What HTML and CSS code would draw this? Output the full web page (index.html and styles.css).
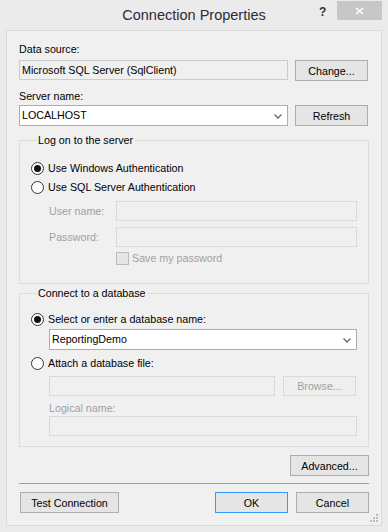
FILE: index.html
```html
<!DOCTYPE html>
<html>
<head>
	<meta charset="utf-8">
	<title>Connection Properties</title>
	<link rel="stylesheet" href="styles.css">
</head>
<body>
	<div class="window">
		<div class="titlebar">
			<span class="caption">Connection Properties</span>
			<span class="help">?</span>
			<span class="close">
				<svg width="9" height="8" viewBox="0 0 9 8"><path d="M1 1 L8 7 M8 1 L1 7" stroke="#fff" stroke-width="1.6"/></svg>
			</span>
		</div>
		<div class="client">
			<div class="label first">Data source:</div>
			<div class="row">
				<div class="textbox readonly wide">Microsoft SQL Server (SqlClient)</div>
				<button class="btn">Change...</button>
			</div>
			<div class="label server">Server name:</div>
			<div class="row server-row">
				<div class="textbox combo wide">LOCALHOST
					<svg class="arrow" width="8" height="5" viewBox="0 0 8 5"><path d="M0.5 0.5 L4 4 L7.5 0.5" stroke="#666" stroke-width="1.3" fill="none"/></svg>
				</div>
				<button class="btn">Refresh</button>
			</div>

			<fieldset class="group logon">
				<legend>Log on to the server</legend>
				<label class="opt"><input type="radio" name="auth" checked><span>Use Windows Authentication</span></label>
				<label class="opt"><input type="radio" name="auth"><span>Use SQL Server Authentication</span></label>
				<div class="field user">
					<span class="dim">User name:</span>
					<div class="textbox disabled"></div>
				</div>
				<div class="field pass">
					<span class="dim">Password:</span>
					<div class="textbox disabled"></div>
				</div>
				<div class="save">
					<span class="check"></span>
					<span class="dim">Save my password</span>
				</div>
			</fieldset>

			<fieldset class="group database">
				<legend>Connect to a database</legend>
				<label class="opt"><input type="radio" name="db" checked><span>Select or enter a database name:</span></label>
				<div class="textbox combo indent">ReportingDemo
					<svg class="arrow" width="8" height="5" viewBox="0 0 8 5"><path d="M0.5 0.5 L4 4 L7.5 0.5" stroke="#666" stroke-width="1.3" fill="none"/></svg>
				</div>
				<label class="opt attach"><input type="radio" name="db"><span>Attach a database file:</span></label>
				<div class="row file-row">
					<div class="textbox disabled file"></div>
					<button class="btn disabled-btn">Browse...</button>
				</div>
				<div class="label dim logical">Logical name:</div>
				<div class="textbox disabled indent logical-box"></div>
			</fieldset>

			<div class="advanced-row">
				<button class="btn advanced">Advanced...</button>
			</div>
			<div class="separator"></div>
			<div class="footer">
				<button class="btn test">Test Connection</button>
				<div class="spacer"></div>
				<button class="btn ok">OK</button>
				<button class="btn">Cancel</button>
			</div>
			<svg class="grip" width="9" height="9" viewBox="0 0 9 9">
				<rect x="6" y="0" width="2" height="2" fill="#bcbcbc"/>
				<rect x="3" y="3" width="2" height="2" fill="#bcbcbc"/>
				<rect x="6" y="3" width="2" height="2" fill="#bcbcbc"/>
				<rect x="0" y="6" width="2" height="2" fill="#bcbcbc"/>
				<rect x="3" y="6" width="2" height="2" fill="#bcbcbc"/>
				<rect x="6" y="6" width="2" height="2" fill="#bcbcbc"/>
			</svg>
		</div>
	</div>
</body>
</html>
```

FILE: styles.css
```css
body {
	margin: 0;
	padding: 0;
	background-color: #ebebeb;
	font-family: "Liberation Sans", Arial, sans-serif;
	font-size: 10.7px;
	line-height: 13px;
	color: #000;
}

.window {
	width: 388px;
	height: 532px;
	position: relative;
}

.titlebar {
	height: 30px;
	position: relative;
}
.caption {
	display: block;
	text-align: center;
	font-size: 14.5px;
	line-height: 18px;
	padding-top: 6px;
	color: #2b2b3a;
}
.help {
	position: absolute;
	left: 319px;
	top: 6px;
	font-weight: bold;
	font-size: 12px;
	color: #333;
}
.close {
	position: absolute;
	left: 337px;
	top: 1px;
	width: 45px;
	height: 19px;
	background: #c7c7c7;
	display: flex;
	align-items: center;
	justify-content: center;
}

.client {
	position: relative;
	margin-left: 6px;
	width: 350px;
	height: 482px;
	border: 1px solid #dadada;
	background: #f0f0f0;
	padding: 12px 12px 0 12px;
}

.label.first {
	height: 13px;
}
.row {
	display: flex;
	align-items: flex-start;
	gap: 7px;
	margin-top: 4px;
}
.label.server {
	margin-top: 9px;
}
.server-row {
	margin-top: 2px;
}

.textbox {
	box-sizing: border-box;
	height: 20px;
	border: 1px solid #abadb3;
	background: #fff;
	padding: 3px 0 0 2px;
	position: relative;
	white-space: nowrap;
}
.textbox.wide {
	width: 269px;
}
.textbox.readonly {
	background: #f0f0f0;
	border-color: #cccccc;
}
.textbox.combo {
	height: 21px;
	padding-top: 3px;
}
.textbox.disabled {
	background: #f0f0f0;
	border-color: #d9d9d9;
}
.arrow {
	position: absolute;
	right: 5px;
	top: 8px;
}

.btn {
	box-sizing: border-box;
	width: 73px;
	height: 21px;
	margin: 0;
	padding: 0;
	border: 1px solid #adadad;
	background: #e5e5e5;
	font-family: "Liberation Sans", Arial, sans-serif;
	font-size: 10.7px;
	color: #000;
}
.btn.disabled-btn {
	color: #a0a0a0;
	border-color: #d9d9d9;
	background: #efefef;
	height: 20px;
}

.group {
	margin: 0;
	min-width: 0;
	border: 1px solid #dcdcdc;
	padding: 12px 11px 0 11px;
}
.group legend {
	padding: 0 2px 0 1px;
	margin-left: 6px;
	line-height: 13px;
}
.logon {
	margin-top: 8px;
	padding-bottom: 18px;
}
.database {
	margin-top: 3px;
	padding-top: 10px;
	padding-bottom: 10px;
}

.opt {
	display: flex;
	align-items: center;
	height: 19px;
	gap: 4px;
}
.opt input {
	appearance: none;
	-webkit-appearance: none;
	margin: 0;
	width: 13px;
	height: 13px;
	border: 1px solid #333;
	border-radius: 50%;
	background: #fff;
	display: grid;
	place-content: center;
}
.opt input:checked::before {
	content: "";
	width: 7px;
	height: 7px;
	border-radius: 50%;
	background: #111;
}

.dim {
	color: #a0a0a0;
}

.field {
	display: flex;
	align-items: center;
}
.field .dim {
	width: 67px;
	margin-left: 18px;
}
.field .textbox {
	flex: 1;
}
.user {
	margin-top: 4px;
}
.pass {
	margin-top: 6px;
}
.save {
	display: flex;
	align-items: center;
	gap: 3px;
	margin-top: 5px;
	margin-left: 85px;
}
.check {
	box-sizing: border-box;
	width: 13px;
	height: 13px;
	border: 1px solid #bcbcbc;
	background: #e6e6e6;
}

.indent {
	margin-left: 18px;
}
.attach {
	margin-top: 4px;
}
.file-row {
	margin-top: 3px;
	margin-left: 18px;
	gap: 8px;
}
.textbox.file {
	width: 226px;
}
.label.logical {
	margin-top: 6px;
	margin-left: 18px;
}
.logical-box {
	margin-top: 1px;
}

.advanced-row {
	display: flex;
	justify-content: flex-end;
	margin-top: 8px;
}
.btn.advanced {
	width: 79px;
}
.separator {
	height: 1px;
	background: #a0a0a0;
	margin-top: 7px;
}
.footer {
	display: flex;
	gap: 8px;
	margin-top: 8px;
}
.btn.test {
	width: 99px;
	margin-left: 1px;
}
.spacer {
	flex: 1;
}
.btn.ok {
	border-color: #3399ff;
}
.grip {
	position: absolute;
	right: 2px;
	bottom: 2px;
}
```
